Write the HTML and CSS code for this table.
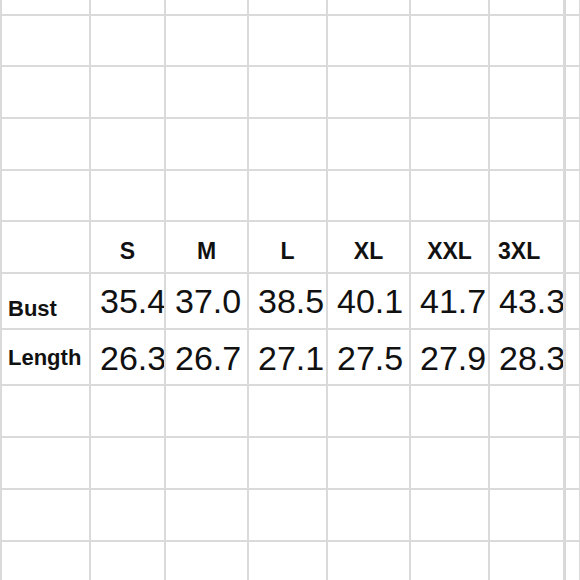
FILE: index.html
```html
<!DOCTYPE html>
<html>
<head>
<meta charset="utf-8">
<link rel="stylesheet" href="styles.css">
</head>
<body>
<div class="sheet">
  <div class="c"></div><div class="c"></div><div class="c"></div><div class="c"></div><div class="c"></div><div class="c"></div><div class="c"></div><div class="c edge"></div>
  <div class="c"></div><div class="c"></div><div class="c"></div><div class="c"></div><div class="c"></div><div class="c"></div><div class="c"></div><div class="c edge"></div>
  <div class="c"></div><div class="c"></div><div class="c"></div><div class="c"></div><div class="c"></div><div class="c"></div><div class="c"></div><div class="c edge"></div>
  <div class="c"></div><div class="c"></div><div class="c"></div><div class="c"></div><div class="c"></div><div class="c"></div><div class="c"></div><div class="c edge"></div>
  <div class="c"></div><div class="c"></div><div class="c"></div><div class="c"></div><div class="c"></div><div class="c"></div><div class="c"></div><div class="c edge"></div>

  <div class="c"></div>
  <div class="c head">S</div>
  <div class="c head">M</div>
  <div class="c head">L</div>
  <div class="c head">XL</div>
  <div class="c head">XXL</div>
  <div class="c head head-left">3XL</div>
  <div class="c edge"></div>

  <div class="c label label-bust">Bust</div>
  <div class="c num num-bust">35.4</div>
  <div class="c num num-bust">37.0</div>
  <div class="c num num-bust">38.5</div>
  <div class="c num num-bust">40.1</div>
  <div class="c num num-bust">41.7</div>
  <div class="c num num-bust">43.3</div>
  <div class="c edge"></div>

  <div class="c label label-length">Length</div>
  <div class="c num num-length">26.3</div>
  <div class="c num num-length">26.7</div>
  <div class="c num num-length">27.1</div>
  <div class="c num num-length">27.5</div>
  <div class="c num num-length">27.9</div>
  <div class="c num num-length">28.3</div>
  <div class="c edge"></div>

  <div class="c"></div><div class="c"></div><div class="c"></div><div class="c"></div><div class="c"></div><div class="c"></div><div class="c"></div><div class="c edge"></div>
  <div class="c"></div><div class="c"></div><div class="c"></div><div class="c"></div><div class="c"></div><div class="c"></div><div class="c"></div><div class="c edge"></div>
  <div class="c"></div><div class="c"></div><div class="c"></div><div class="c"></div><div class="c"></div><div class="c"></div><div class="c"></div><div class="c edge"></div>
  <div class="c"></div><div class="c"></div><div class="c"></div><div class="c"></div><div class="c"></div><div class="c"></div><div class="c"></div><div class="c edge"></div>
</div>
</body>
</html>
```

FILE: styles.css
```css
html, body {
  margin: 0;
  padding: 0;
  background: #ffffff;
  overflow: hidden;
}

.sheet {
  display: grid;
  grid-template-columns: 87px 73px 81px 77px 81px 77px 73px 14px;
  grid-template-rows: 14px 49px 50px 50px 49px 50px 54px 54px 50px 50px 50px 50px;
  gap: 2px;
  padding-left: 2px;
  background: #dadada;
  width: 580px;
  height: 580px;
  overflow: hidden;
  font-family: "Liberation Sans", Arial, sans-serif;
  color: #111111;
}

.c {
  background: #ffffff;
  display: flex;
  align-items: flex-end;
  overflow: hidden;
  white-space: nowrap;
  min-width: 0;
}

.edge {
  border-left: 1px solid #d6d6d6;
}

.head {
  justify-content: center;
  font-weight: bold;
  font-size: 23px;
  line-height: 1;
  padding-bottom: 9px;
}

.head-left {
  justify-content: flex-start;
  padding-left: 8px;
}

.label {
  font-weight: bold;
  font-size: 22px;
  line-height: 1;
  padding-left: 6px;
}

.label-bust {
  padding-bottom: 8px;
}

.label-length {
  padding-bottom: 15px;
}

.num {
  font-size: 34px;
  line-height: 1;
  padding-left: 9px;
}

.num-bust {
  padding-bottom: 10px;
}

.num-length {
  padding-bottom: 9px;
}
```
